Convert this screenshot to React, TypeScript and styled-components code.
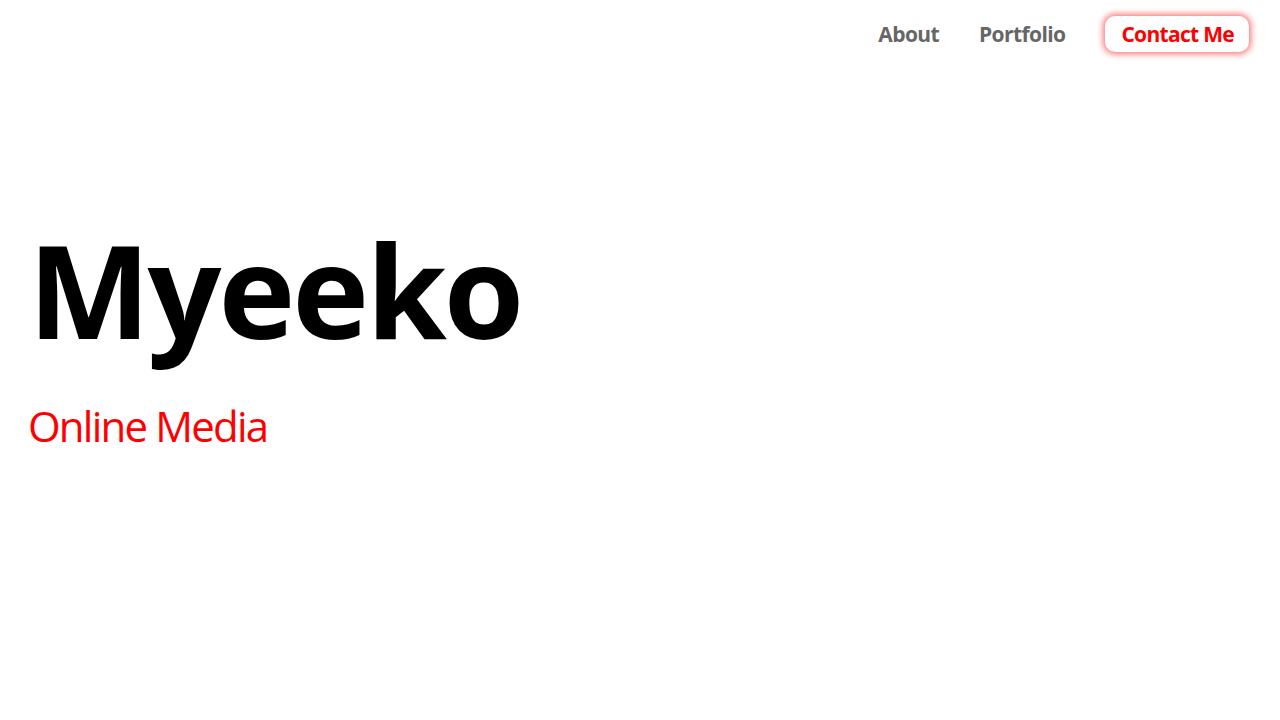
import React from "react";
import styled, { createGlobalStyle } from "styled-components";

const Global = createGlobalStyle`
  html, body { margin: 0; padding: 0; background: #ffffff; }
  body { font-family: "Open Sans", "Noto Sans", sans-serif; }
`;

const Page = styled.div`
  width: 1280px;
  height: 720px;
  display: flex;
  flex-direction: column;
`;

const Header = styled.header`
  display: flex;
  justify-content: flex-end;
  align-items: center;
  padding: 16px 31px 0 0;
  height: 36px;
`;

const Nav = styled.nav`
  display: flex;
  align-items: center;
  gap: 40px;
`;

const NavLink = styled.a`
  font-family: "Open Sans", sans-serif;
  font-weight: 700;
  font-size: 21px;
  letter-spacing: -0.6px;
  color: #666666;
  text-decoration: none;
`;

const ContactButton = styled.a`
  display: flex;
  align-items: center;
  justify-content: center;
  box-sizing: border-box;
  height: 36px;
  padding: 0 15px 0 16px;
  border-radius: 10px;
  background: #ffffff;
  color: #ff0000;
  font-family: "Open Sans", sans-serif;
  font-weight: 700;
  font-size: 21px;
  letter-spacing: -0.7px;
  text-decoration: none;
  box-shadow: 0 0 6px 2px rgba(255, 0, 0, 0.55);
`;

const Hero = styled.section`
  display: flex;
  flex-direction: column;
  gap: 51px;
  padding: 172px 0 0 28px;
`;

const Title = styled.h1`
  margin: 0;
  font-family: "Open Sans", sans-serif;
  font-weight: 700;
  font-size: 130px;
  line-height: 1;
  color: #000000;
  letter-spacing: -3px;
`;

const Subtitle = styled.p`
  margin: 0;
  font-family: "Open Sans", sans-serif;
  font-weight: 400;
  font-size: 42px;
  line-height: 1;
  letter-spacing: -1.8px;
  color: #ff0000;
`;

export default function App() {
  return (
    <Page>
      <Global />
      <Header>
        <Nav>
          <NavLink href="#">About</NavLink>
          <NavLink href="#">Portfolio</NavLink>
          <ContactButton href="#">Contact Me</ContactButton>
        </Nav>
      </Header>
      <Hero>
        <Title>Myeeko</Title>
        <Subtitle>Online Media</Subtitle>
      </Hero>
    </Page>
  );
}
